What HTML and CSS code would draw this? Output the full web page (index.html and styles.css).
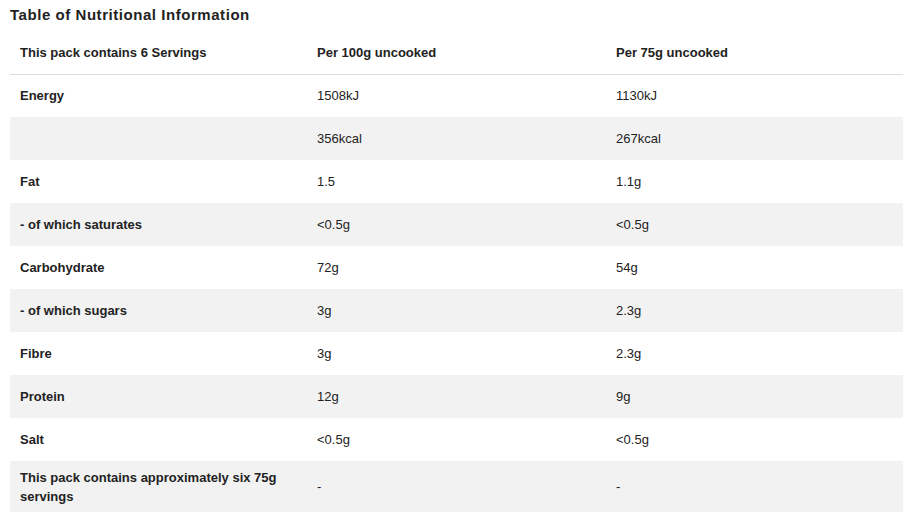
FILE: index.html
```html
<!DOCTYPE html>
<html>
<head>
<meta charset="utf-8">
<link rel="stylesheet" href="styles.css">
</head>
<body>
<h2 class="title">Table of Nutritional Information</h2>
<table class="nutri">
  <colgroup><col class="c1"><col class="c2"><col class="c3"></colgroup>
  <thead>
    <tr><th>This pack contains 6 Servings</th><th>Per 100g uncooked</th><th>Per 75g uncooked</th></tr>
  </thead>
  <tbody>
    <tr><th>Energy</th><td>1508kJ</td><td>1130kJ</td></tr>
    <tr class="alt"><th></th><td>356kcal</td><td>267kcal</td></tr>
    <tr><th>Fat</th><td>1.5</td><td>1.1g</td></tr>
    <tr class="alt"><th>- of which saturates</th><td>&lt;0.5g</td><td>&lt;0.5g</td></tr>
    <tr><th>Carbohydrate</th><td>72g</td><td>54g</td></tr>
    <tr class="alt"><th>- of which sugars</th><td>3g</td><td>2.3g</td></tr>
    <tr><th>Fibre</th><td>3g</td><td>2.3g</td></tr>
    <tr class="alt"><th>Protein</th><td>12g</td><td>9g</td></tr>
    <tr><th>Salt</th><td>&lt;0.5g</td><td>&lt;0.5g</td></tr>
    <tr class="alt last"><th>This pack contains approximately six 75g servings</th><td>-</td><td>-</td></tr>
  </tbody>
</table>
</body>
</html>
```
FILE: styles.css
```css
html, body { margin: 0; padding: 0; background: #fff; }
body { padding: 0 10px; font-family: "Liberation Sans", Arial, sans-serif; color: #222; }
.title {
  margin: 0;
  padding-top: 7px;
  height: 25px;
  font-size: 15px;
  line-height: 16px;
  font-weight: bold;
  letter-spacing: 0.55px;
  color: #222;
}
.nutri {
  width: 893px;
  border-collapse: collapse;
  table-layout: fixed;
  font-size: 13px;
}
.c1 { width: 297px; }
.c2 { width: 299px; }
.c3 { width: 297px; }
.nutri tr { height: 43px; }
.nutri thead tr { height: 42px; }
.nutri tr.last { height: 51px; }
.nutri th, .nutri td {
  text-align: left;
  vertical-align: middle;
  padding: 0 10px;
  line-height: 19px;
}
.nutri th { font-weight: bold; }
.nutri td { font-weight: normal; }
.nutri thead th { border-bottom: 1px solid #dcdcdc; }
.nutri tr.alt { background: #f2f2f2; }
```
